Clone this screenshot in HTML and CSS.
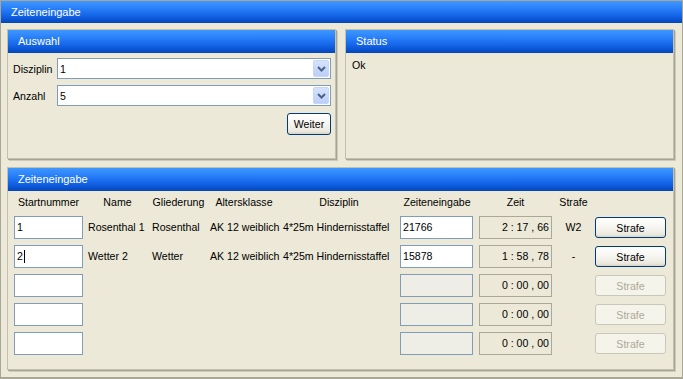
FILE: index.html
```html
<!DOCTYPE html>
<html lang="de">
<head>
<meta charset="utf-8">
<title>Zeiteneingabe</title>
<link rel="stylesheet" href="styles.css">
</head>
<body>
<div class="window">
  <div class="titlebar">Zeiteneingabe</div>
  <div class="client">
    <div class="top-row">
      <section class="panel">
        <div class="panel-title">Auswahl</div>
        <div class="auswahl-body">
          <div class="field-row">
            <span class="label">Disziplin</span>
            <div class="combo">
              <span class="combo-value">1</span>
              <span class="combo-btn"><svg width="15" height="17" viewBox="0 0 15 17"><polyline points="4,7 7.5,10.5 11,7" fill="none" stroke="#4d6185" stroke-width="2"/></svg></span>
            </div>
          </div>
          <div class="field-row">
            <span class="label">Anzahl</span>
            <div class="combo">
              <span class="combo-value">5</span>
              <span class="combo-btn"><svg width="15" height="17" viewBox="0 0 15 17"><polyline points="4,7 7.5,10.5 11,7" fill="none" stroke="#4d6185" stroke-width="2"/></svg></span>
            </div>
          </div>
          <div class="actions"><button class="btn weiter">Weiter</button></div>
        </div>
      </section>
      <section class="panel">
        <div class="panel-title">Status</div>
        <div class="status-body">Ok</div>
      </section>
    </div>
    <section class="panel zeiten">
      <div class="panel-title">Zeiteneingabe</div>
      <div class="zeiten-body">
        <div class="grid">
          <div class="th">Startnummer</div>
          <div class="th">Name</div>
          <div class="th">Gliederung</div>
          <div class="th">Altersklasse</div>
          <div class="th">Disziplin</div>
          <div class="th">Zeiteneingabe</div>
          <div class="th">Zeit</div>
          <div class="th">Strafe</div>
          <div class="th"></div>

          <div class="input">1</div>
          <div class="td">Rosenthal 1</div>
          <div class="td">Rosenthal</div>
          <div class="td">AK 12 weiblich</div>
          <div class="td">4*25m Hindernisstaffel</div>
          <div class="input wide">21766</div>
          <div class="zeit">2 : 17 , 66</div>
          <div class="td center">W2</div>
          <button class="btn strafe">Strafe</button>

          <div class="input">2<span class="caret"></span></div>
          <div class="td">Wetter 2</div>
          <div class="td">Wetter</div>
          <div class="td">AK 12 weiblich</div>
          <div class="td">4*25m Hindernisstaffel</div>
          <div class="input wide">15878</div>
          <div class="zeit">1 : 58 , 78</div>
          <div class="td center">-</div>
          <button class="btn strafe">Strafe</button>

          <div class="input"></div>
          <div class="td"></div>
          <div class="td"></div>
          <div class="td"></div>
          <div class="td"></div>
          <div class="input wide disabled"></div>
          <div class="zeit">0 : 00 , 00</div>
          <div class="td center"></div>
          <button class="btn strafe" disabled>Strafe</button>

          <div class="input"></div>
          <div class="td"></div>
          <div class="td"></div>
          <div class="td"></div>
          <div class="td"></div>
          <div class="input wide disabled"></div>
          <div class="zeit">0 : 00 , 00</div>
          <div class="td center"></div>
          <button class="btn strafe" disabled>Strafe</button>

          <div class="input"></div>
          <div class="td"></div>
          <div class="td"></div>
          <div class="td"></div>
          <div class="td"></div>
          <div class="input wide disabled"></div>
          <div class="zeit">0 : 00 , 00</div>
          <div class="td center"></div>
          <button class="btn strafe" disabled>Strafe</button>
        </div>
      </div>
    </section>
  </div>
</div>
</body>
</html>
```
FILE: styles.css
```css
* { box-sizing: border-box; }

body {
  margin: 0;
  background: #ece9d8;
  font-family: "Liberation Sans", Arial, sans-serif;
  font-size: 10.6px;
  color: #000;
}

.window {
  width: 683px;
  height: 379px;
  border: 1px solid #a9a695;
  border-bottom-width: 2px;
  background: #ece9d8;
  display: flex;
  flex-direction: column;
}

.titlebar,
.panel-title {
  background: linear-gradient(to bottom, #3f97ff 0%, #2f86fb 25%, #1b6eef 55%, #0c58da 80%, #0446b6 100%);
  color: #fff;
  font-size: 11px;
}

.titlebar {
  height: 22px;
  line-height: 22px;
  padding-left: 10px;
}

.client {
  padding: 6px 8px 0 6px;
  display: flex;
  flex-direction: column;
  gap: 8px;
}

.top-row {
  display: grid;
  grid-template-columns: 1fr 1fr;
  gap: 9px;
}

.panel {
  height: 130px;
  border: 1px solid #c4c0ae;
  box-shadow: 1px 1px 0 #a8a493, 2px 2px 0 #cfcbbc;
  display: flex;
  flex-direction: column;
}

.panel-title {
  height: 23px;
  line-height: 23px;
  padding-left: 10px;
}

.auswahl-body {
  padding: 5px 4px 0 5px;
  display: flex;
  flex-direction: column;
  gap: 6px;
}

.field-row {
  display: flex;
  align-items: center;
  height: 21px;
}

.label {
  width: 44px;
  flex: none;
}

.combo {
  flex: 1;
  height: 21px;
  border: 1px solid #7f9db9;
  background: #fff;
  display: flex;
  align-items: center;
  justify-content: space-between;
  padding-left: 2px;
}

.combo-btn {
  width: 16px;
  height: 17px;
  margin-right: 1px;
  border: 1px solid #c6d5fa;
  border-radius: 2px;
  background: linear-gradient(to bottom, #d6e2fd, #bccffa);
  display: flex;
  justify-content: center;
}

.combo-btn svg { margin: -1px; }

.actions {
  display: flex;
  justify-content: flex-end;
  margin-top: 1px;
}

.btn {
  font-family: inherit;
  font-size: 10.6px;
  color: #000;
  border: 1px solid #003c74;
  border-radius: 3px;
  background: linear-gradient(to bottom, #ffffff 0%, #f6f5f0 50%, #ece9e0 85%, #d8d3c6 100%);
  padding: 0;
}

.weiter {
  width: 44px;
  height: 22px;
}

.status-body {
  padding: 6px 6px 0 6px;
  line-height: 13px;
}

.zeiten {
  height: 203px;
}

.zeiten-body {
  padding: 4px 0 0 6px;
}

.grid {
  display: grid;
  grid-template-columns: 69px 59px 53px 68px 112px 74px 73px 33px 71px;
  grid-template-rows: 15px repeat(5, 23px);
  column-gap: 5px;
  row-gap: 6px;
  align-items: center;
}

.th {
  text-align: center;
  white-space: nowrap;
  line-height: 15px;
}

.td {
  white-space: nowrap;
  line-height: 13px;
}

.td.center { text-align: center; }

.input {
  height: 23px;
  border: 1px solid #7f9db9;
  background: #fff;
  padding-left: 2px;
  line-height: 21px;
  display: flex;
  align-items: center;
}

.input.wide { width: 73px; }

.input.disabled { background: #eeede6; }

.caret {
  display: inline-block;
  width: 1px;
  height: 13px;
  background: #000;
  margin-left: 1px;
}

.zeit {
  height: 23px;
  border: 1px solid #aca899;
  background: #ece9d8;
  text-align: right;
  padding-right: 2px;
  line-height: 21px;
  white-space: nowrap;
}

.strafe {
  width: 71px;
  height: 21px;
}

.strafe:disabled {
  border-color: #c9c7ba;
  background: #f5f4ea;
  color: #aca899;
}
```
